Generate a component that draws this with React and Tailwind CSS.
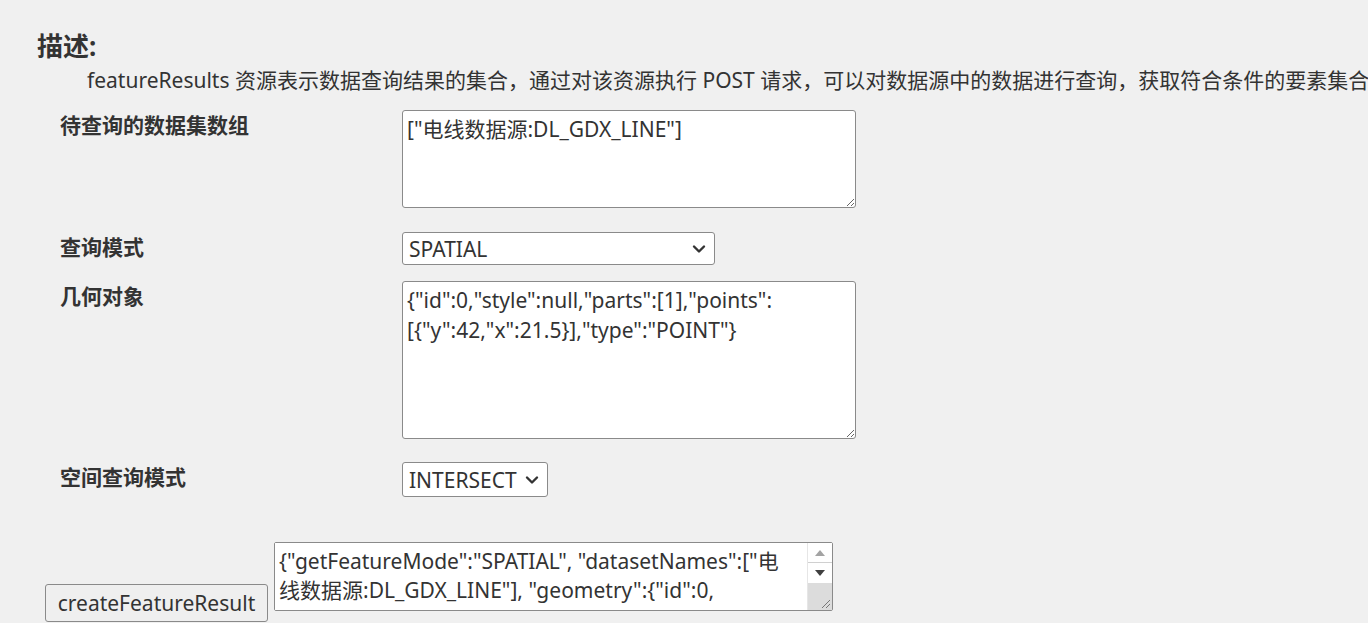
import { useState } from 'react'

const FONT = 'font-["Noto_Sans","Noto_Sans_CJK_SC",sans-serif]'

const GEOMETRY = '{"id":0,"style":null,"parts":[1],"points":\n[{"y":42,"x":21.5}],"type":"POINT"}'
const PARAMS =
  '{"getFeatureMode":"SPATIAL", "datasetNames":["电\n线数据源:DL_GDX_LINE"], "geometry":{"id":0,\n"style":null,"parts":[1],"points":[{"y":42,"x":21.5}],\n"type":"POINT"}, "spatialQueryMode":"INTERSECT"}'

function Chevron() {
  return (
    <svg width="14" height="10" viewBox="0 0 14 10" className="pointer-events-none absolute right-[9px] top-1/2 -translate-y-1/2">
      <path d="M2 2.5 L7 7.5 L12 2.5" fill="none" stroke="#333" strokeWidth="2.4" strokeLinecap="round" strokeLinejoin="round" />
    </svg>
  )
}

function Select({ value, options, width, height }) {
  const [v, setV] = useState(value)
  return (
    <div className={`relative ${width}`}>
      <select
        value={v}
        onChange={e => setV(e.target.value)}
        className={`${height} w-full appearance-none rounded-[3px] border border-[#8a8a8a] bg-white pl-[6px] pr-[26px] text-[21px] leading-[28px] text-[#333] outline-none`}
      >
        {options.map(o => <option key={o}>{o}</option>)}
      </select>
      <Chevron />
    </div>
  )
}

function Area({ value, height }) {
  return (
    <textarea
      defaultValue={value}
      wrap="off"
      className={`${height} w-[454px] overflow-hidden rounded-[3px] border border-[#8a8a8a] bg-white pl-[4px] pt-[3px] text-[21px] leading-[30px] text-[#333] outline-none`}
    />
  )
}

// one row per query parameter
const ROWS = [
  { label: '待查询的数据集数组', mt: 'mt-[15px]', field: <Area value={'["电线数据源:DL_GDX_LINE"]'} height="h-[98px]" /> },
  { label: '查询模式', mt: 'mt-[24px]', field: <Select value="SPATIAL" options={['SPATIAL', 'ID', 'SQL', 'BOUNDS']} width="w-[313px]" height="h-[33px]" /> },
  { label: '几何对象', mt: 'mt-[16px]', field: <Area value={GEOMETRY} height="h-[158px]" /> },
  { label: '空间查询模式', mt: 'mt-[23px]', field: <Select value="INTERSECT" options={['INTERSECT', 'CONTAIN', 'CROSS']} width="w-[146px]" height="h-[35px]" /> },
]

export default function App() {
  return (
    <div className={`${FONT} min-h-[623px] w-full overflow-hidden bg-[#f0f0f0] pt-[28px] text-[#333]`}>
      <h2 className="pl-[37px] text-[26px] font-bold leading-[36px]">描述:</h2>
      <p className="mt-[1px] whitespace-nowrap pl-[87px] text-[21px] leading-[30px]">
        featureResults 资源表示数据查询结果的集合，通过对该资源执行 POST 请求，可以对数据源中的数据进行查询，获取符合条件的要素集合。
      </p>

      {ROWS.map(r => (
        <div key={r.label} className={`${r.mt} flex items-start pl-[60px]`}>
          <div className="w-[342px] shrink-0 text-[21px] font-bold leading-[30px]">{r.label}</div>
          {r.field}
        </div>
      ))}

      {/* submit row */}
      <div className="mt-[45px] flex items-start gap-[6px] pl-[45px]">
        <button className="mt-[42px] h-[38px] w-[223px] rounded-[3px] border border-[#8a8a8a] bg-[#efefef] px-[10px] text-[21px] leading-[28px] text-[#333]">
          createFeatureResult
        </button>
        <div className="flex h-[69px] w-[559px] rounded-[2px] border border-[#8a8a8a] bg-white">
          <textarea
            defaultValue={PARAMS}
            wrap="off"
            className="h-full flex-1 resize-none overflow-hidden bg-white pl-[4px] pt-[4px] text-[21px] leading-[29px] text-[#333] outline-none"
          />
          {/* fake classic scrollbar */}
          <div className="flex w-[25px] flex-col border-l border-[#e6e6e6] bg-white">
            <div className="flex h-[20px] items-center justify-center border-b border-[#d0d0d0]">
              <svg width="12" height="8" viewBox="0 0 12 8"><path d="M1 7 L6 1 L11 7 Z" fill="#a3a3a3" /></svg>
            </div>
            <div className="flex h-[20px] items-center justify-center">
              <svg width="12" height="8" viewBox="0 0 12 8"><path d="M1 1 L11 1 L6 7 Z" fill="#404040" /></svg>
            </div>
            <div className="relative flex-1 bg-[#dcdcdc]">
              <svg width="12" height="12" viewBox="0 0 12 12" className="absolute bottom-[1px] right-[1px]">
                <path d="M11 3 L3 11 M11 7 L7 11" stroke="#777" strokeWidth="1" />
              </svg>
            </div>
          </div>
        </div>
      </div>
    </div>
  )
}
